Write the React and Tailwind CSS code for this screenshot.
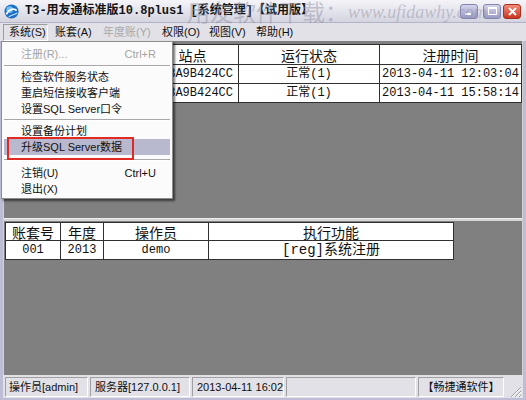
// T3 系统管理 window with the 系统 menu dropped down

const MONO = "font-['Liberation_Mono','Noto_Sans_CJK_SC',monospace]";
const SANS = "font-['Liberation_Sans','Noto_Sans_CJK_SC',sans-serif]";

const MENUBAR = [
  { t: '账套(A)', w: 'w-[48px]' },
  { t: '年度账(Y)', w: 'w-[59px]', dis: true },
  { t: '权限(O)', w: 'w-[47px]' },
  { t: '视图(V)', w: 'w-[47px]' },
  { t: '帮助(H)', w: 'w-[48px]' },
];

const MENU = [
  { t: '注册(R)...', k: 'Ctrl+R', dis: true },
  { sep: 'h-[7px]' },
  { t: '检查软件服务状态' },
  { t: '重启短信接收客户端' },
  { t: '设置SQL Server口令' },
  { sep: 'h-[6px]' },
  { t: '设置备份计划' },
  { t: '升级SQL Server数据', hi: true },
  { sep: 'h-[10px]' },
  { t: '注销(U)', k: 'Ctrl+U' },
  { t: '退出(X)' },
];

// the first column sits under the open menu, so it is left blank
const SESSIONS = [
  { site: 'WIN-3A9B424CC', state: '正常(1)', time: '2013-04-11 12:03:04' },
  { site: 'WIN-3A9B424CC', state: '正常(1)', time: '2013-04-11 15:58:14' },
];

function TitleIcon() {
  return (
    <svg width="15" height="15" viewBox="0 0 16 16">
      <circle cx="8" cy="8" r="7.5" fill="#1d6fc4" />
      <circle cx="6" cy="6" r="3.5" fill="#6cc0f4" />
      <path d="M2.5 11 C5 5.5, 10.5 4, 13.5 7" stroke="#ffffff" strokeWidth="1.8" fill="none" />
      <path d="M5 13.5 C8 12, 11.5 11, 14 9.5" stroke="#bfe4ff" strokeWidth="1.2" fill="none" />
    </svg>
  );
}

function WinButton({ kind }) {
  const base = 'w-[18px] h-[15px] rounded-[3px] border flex items-center justify-center';
  if (kind === 'close') {
    return (
      <div className={`${base} bg-linear-to-b from-[#f08a78] to-[#c8341e] border-[#a83020]`}>
        <svg width="9" height="9" viewBox="0 0 9 9">
          <path d="M1 1 L8 8 M8 1 L1 8" stroke="#fff" strokeWidth="1.8" />
        </svg>
      </div>
    );
  }
  return (
    <div className={`${base} bg-linear-to-b from-[#d4d4ec] to-[#9a9ac4] border-[#8484ac]`}>
      {kind === 'min' ? (
        <div className="w-[6px] h-[2px] bg-white mt-[6px] -ml-[3px]" />
      ) : (
        <div className="w-[9px] h-[8px] border border-white border-t-2" />
      )}
    </div>
  );
}

function Sunken({ className, children }) {
  return (
    <div className={`h-[20px] flex items-center border border-t-[#a0a0a0] border-l-[#a0a0a0] border-b-white border-r-white ${className}`}>
      {children}
    </div>
  );
}

export default function App() {
  return (
    <div className={`relative w-[526px] h-[400px] overflow-hidden flex flex-col bg-[#bdbdd6] ${SANS}`}>
      {/* title bar */}
      <div className="relative h-[23px] shrink-0 flex items-center bg-linear-to-b from-[#f4f4f8] to-[#d4d4e0] border-b border-[#b4b4c8]">
        <div className="ml-[4px]"><TitleIcon /></div>
        <span className={`ml-[6px] text-[12px] leading-[14px] font-bold text-[#141414] whitespace-nowrap ${MONO}`}>
          T3-用友通标准版10.8plus1 [系统管理]【试用版】
        </span>
        <div className="ml-auto mr-[5px] flex gap-[2px]">
          <WinButton kind="min" />
          <div className="w-[1px]" />
          <WinButton kind="max" />
          <WinButton kind="close" />
        </div>
        {/* watermark */}
        <div className="absolute left-[187px] top-0 h-[23px] flex items-center whitespace-nowrap text-[rgba(140,140,160,0.45)] pointer-events-none">
          <span className="text-[23px] leading-[23px] font-['Noto_Sans_CJK_SC',sans-serif]">用友软件下载：</span>
          <span className="text-[18px] leading-[18px] italic font-['Liberation_Serif',serif]">www.ufidawhy.com</span>
        </div>
      </div>

      {/* menu bar */}
      <div className="h-[18px] shrink-0 flex items-center bg-[#e1e1e7] text-[11px] leading-[14px] text-[#101010]">
        <div className="ml-[3px] w-[45px] h-[17px] flex items-center pl-[5px] border border-t-[#9c9c9c] border-l-[#9c9c9c] border-b-white border-r-white">
          系统(S)
        </div>
        <div className="w-[7px]" />
        {MENUBAR.map((m) => (
          <span key={m.t} className={`${m.w} whitespace-nowrap ${m.dis ? 'text-[#a8a8a8]' : ''}`}>{m.t}</span>
        ))}
      </div>

      {/* client area */}
      <div className="flex-1 flex flex-col mx-[3px] border-x border-[#d2d2d2]">
        <div className="h-[177px] shrink-0 bg-[#808080] pt-[3px] pl-[1px]">
          <table className="table-fixed border-collapse bg-white w-[516px] text-[#101010]">
            <colgroup>
              <col className="w-[129px]" />
              <col className="w-[104px]" />
              <col className="w-[141px]" />
              <col className="w-[142px]" />
            </colgroup>
            <thead>
              <tr className="h-[20px] text-[14px] leading-[18px] font-['Noto_Sans_CJK_SC',sans-serif]">
                <th className="border border-[#303030] font-normal"></th>
                <th className="border border-[#303030] font-normal pl-[12px] text-center">站点</th>
                <th className="border border-[#303030] font-normal">运行状态</th>
                <th className="border border-[#303030] font-normal">注册时间</th>
              </tr>
            </thead>
            <tbody className={`text-[12px] leading-[16px] ${MONO}`}>
              {SESSIONS.map((s) => (
                <tr key={s.time} className="h-[19px]">
                  <td className="border border-[#303030]"></td>
                  <td className="border border-[#303030] text-right pr-[5px] whitespace-nowrap overflow-hidden">{s.site}</td>
                  <td className="border border-[#303030] text-center">{s.state}</td>
                  <td className="border border-[#303030] text-center whitespace-nowrap">{s.time}</td>
                </tr>
              ))}
            </tbody>
          </table>
        </div>

        {/* splitter */}
        <div className="h-[3px] shrink-0 bg-[#d6d6d6] border-t border-[#efefef]" />

        <div className="flex-1 bg-[#808080] pt-[1px] pl-[1px]">
          <table className="table-fixed border-collapse bg-white w-[448px] text-[#101010]">
            <colgroup>
              <col className="w-[55px]" />
              <col className="w-[43px]" />
              <col className="w-[105px]" />
              <col className="w-[245px]" />
            </colgroup>
            <thead>
              <tr className="h-[18px] text-[14px] leading-[16px] font-['Noto_Sans_CJK_SC',sans-serif]">
                <th className="border border-[#303030] font-normal">账套号</th>
                <th className="border border-[#303030] font-normal">年度</th>
                <th className="border border-[#303030] font-normal">操作员</th>
                <th className="border border-[#303030] border-b-dotted font-normal">执行功能</th>
              </tr>
            </thead>
            <tbody className={`text-[12px] leading-[16px] ${MONO}`}>
              <tr className="h-[19px]">
                <td className="border border-[#303030] text-center">001</td>
                <td className="border border-[#303030] text-center">2013</td>
                <td className="border border-[#303030] text-center">demo</td>
                <td className="border border-[#303030] text-center text-[14px]">[reg]系统注册</td>
              </tr>
            </tbody>
          </table>
        </div>
      </div>

      {/* status bar */}
      <div className="h-[23px] shrink-0 mx-[3px] bg-[#e1e1e7] flex items-start pt-[2px] pl-[2px] gap-[2px] text-[11px] leading-[13px] text-[#101010] whitespace-nowrap">
        <Sunken className="w-[83px] pl-[3px]">操作员[admin]</Sunken>
        <Sunken className="w-[100px] pl-[4px]">服务器[127.0.0.1]</Sunken>
        <Sunken className="w-[92px] pl-[4px]">2013-04-11 16:02</Sunken>
        <Sunken className="w-[130px]" />
        <Sunken className="w-[86px] justify-center">【畅捷通软件】</Sunken>
        <div className="flex-1 h-[21px] flex items-end justify-end pr-[1px]">
          <svg width="13" height="13" viewBox="0 0 13 13">
            <path d="M12 2 L2 12 M12 6 L6 12 M12 10 L10 12" stroke="#a0a0a0" strokeWidth="1" />
            <path d="M12 3 L3 12 M12 7 L7 12 M12 11 L11 12" stroke="#ffffff" strokeWidth="1" />
          </svg>
        </div>
      </div>
      <div className="h-[2px] shrink-0" />

      {/* dropped-down 系统 menu */}
      <div className="absolute left-[1px] top-[41px] w-[172px] bg-[#fbfbfb] border border-[#8c8c8c] shadow-[2px_2px_2px_rgba(0,0,0,0.55)] pt-[4px] pb-[1px] text-[11px] leading-[14px] text-[#101010]">
        {MENU.map((m, i) =>
          m.sep ? (
            <div key={i} className={`${m.sep} flex items-center px-[2px]`}>
              <div className="w-full h-[2px] border-t border-[#a8a8a8] border-b border-b-white" />
            </div>
          ) : (
            <div
              key={i}
              className={`h-[16px] mx-[2px] flex items-center pl-[17px] pr-[14px] whitespace-nowrap ${m.hi ? 'bg-[#b8b8cf]' : ''} ${m.dis ? 'text-[#a4a4a4]' : ''}`}
            >
              <span>{m.t}</span>
              {m.k && <span className="ml-auto">{m.k}</span>}
            </div>
          )
        )}
        {/* highlight frame */}
        <div className="absolute left-[5px] top-[95px] w-[127px] h-[23px] border-2 border-[#e22a24]" />
      </div>
    </div>
  );
}
